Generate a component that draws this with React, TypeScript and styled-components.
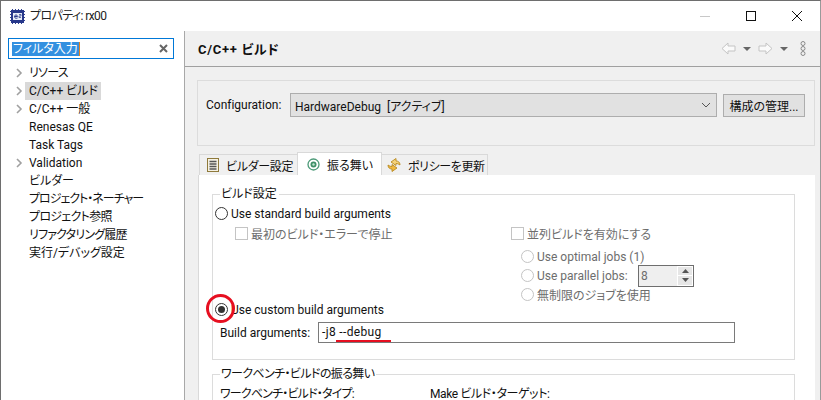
import React from 'react';
import styled, { createGlobalStyle } from 'styled-components';

const GlobalStyle = createGlobalStyle`
  html, body {
    margin: 0;
    padding: 0;
    background: #fff;
  }
  body {
    font-family: Roboto, "Noto Sans CJK JP", sans-serif;
    font-size: 12px;
    font-feature-settings: "palt", "liga" 0;
    color: #111;
  }
  * {
    box-sizing: border-box;
  }
`;

const Window = styled.div`
  width: 821px;
  height: 400px;
  overflow: hidden;
  display: flex;
  flex-direction: column;
  border-top: 1px solid #6e6e6e;
  border-left: 1px solid #6e6e6e;
  border-right: 1px solid #9a9a9a;
  background: #fff;
`;

const TitleBar = styled.div`
  height: 30px;
  flex: none;
  display: flex;
  align-items: center;
  padding-left: 8px;
  gap: 4px;
`;

const TitleText = styled.span`
  font-size: 12px;
  line-height: 16px;
  letter-spacing: -0.6px;
  color: #222;
  flex: 1;
`;

const WindowControls = styled.div`
  display: flex;
  align-items: center;
  height: 100%;
`;

const WindowButton = styled.div`
  width: 46px;
  height: 100%;
  display: flex;
  align-items: center;
  justify-content: center;
`;

const Body = styled.div`
  flex: 1;
  display: flex;
  min-height: 0;
`;

const Sidebar = styled.div`
  width: 184px;
  flex: none;
  padding: 7px 0 0 7px;
  background: #fff;
  border-right: 1px solid #a8a8a8;
`;

const SearchBox = styled.div`
  width: 166px;
  height: 21px;
  border: 1px solid #0078d7;
  display: flex;
  align-items: center;
  padding: 0 5px 0 3px;
  justify-content: space-between;
`;

const SelectedText = styled.span`
  background: #3390e0;
  color: #fff;
  font-size: 12px;
  line-height: 14px;
  padding: 0 1px;
  border-right: 1px solid #e08020;
`;

const Tree = styled.div`
  margin-top: 5px;
  display: flex;
  flex-direction: column;
`;

const TreeRow = styled.div`
  height: 18px;
  display: flex;
  align-items: center;
  padding-left: 8px;
`;

const TreeArrow = styled.span`
  width: 9px;
  flex: none;
  display: flex;
`;

const TreeLabel = styled.span<{ $selected?: boolean; $tracking?: number }>`
  padding: 0 3px 0 4px;
  line-height: 18px;
  white-space: nowrap;
  letter-spacing: ${(p) => p.$tracking ?? 0}px;
  background: ${(p) => (p.$selected ? '#d9d9d9' : 'transparent')};
`;

const Tight = styled.span<{ $tracking: number }>`
  letter-spacing: ${(p) => p.$tracking}px;
`;

const Content = styled.div`
  flex: 1;
  min-width: 0;
  display: flex;
  flex-direction: column;
  background: #f0f0f0;
`;

const PageHeader = styled.div`
  height: 36px;
  flex: none;
  display: flex;
  align-items: center;
  justify-content: space-between;
  padding: 0 14px 0 13px;
  border-bottom: 1px solid #a0a0a0;
`;

const PageTitle = styled.span`
  font-size: 13px;
  font-weight: 700;
  letter-spacing: 0.7px;
  color: #111;
`;

const NavIcons = styled.div`
  display: flex;
  align-items: center;
  gap: 7px;
`;

const MoreSlot = styled.span`
  display: flex;
  margin-left: 5px;
`;

const PagePadding = styled.div`
  padding: 13px 5px 0 12px;
  position: relative;
  flex: 1;
  min-height: 0;
`;

const ConfigBox = styled.div`
  height: 66px;
  border: 1px solid #dcdcdc;
  padding: 12px 9px 0 8px;
  display: flex;
  align-items: flex-start;
`;

const ConfigLabel = styled.span`
  width: 84px;
  line-height: 24px;
  flex: none;
`;

const ConfigSelect = styled.div`
  width: 427px;
  height: 24px;
  flex: none;
  background: #e1e1e1;
  border: 1px solid #adadad;
  display: flex;
  align-items: center;
  justify-content: space-between;
  padding: 0 5px 0 4px;
`;

const ManageButton = styled.div`
  width: 82px;
  height: 23px;
  margin: 1px 0 0 6px;
  flex: none;
  background: #e1e1e1;
  border: 1px solid #adadad;
  display: flex;
  align-items: center;
  justify-content: center;
`;

const TabBar = styled.div`
  display: flex;
  align-items: flex-end;
  height: 23px;
  margin-top: 6px;
  padding-left: 3px;
`;

const Tab = styled.div<{ $active?: boolean; $width: number; $pad: number }>`
  height: ${(p) => (p.$active ? '23px' : '21px')};
  width: ${(p) => p.$width}px;
  display: flex;
  align-items: center;
  gap: 7px;
  padding-left: ${(p) => p.$pad}px;
  white-space: nowrap;
  background: ${(p) => (p.$active ? '#fff' : '#f0f0f0')};
  border: 1px solid #d9d9d9;
  border-bottom: none;
  margin-left: -1px;
  position: relative;
  z-index: ${(p) => (p.$active ? 1 : 0)};
  svg {
    flex: none;
  }
`;

const TabPanel = styled.div`
  background: #fff;
  border-left: 1px solid #d9d9d9;
  margin-left: 1px;
  padding: 12px 20px 0 13px;
  height: 240px;
`;

const GroupBox = styled.fieldset<{ $height: number }>`
  margin: 0 0 7px;
  padding: 3px 0 0 2px;
  height: ${(p) => p.$height}px;
  border: 1px solid #dcdcdc;
  min-width: 0;
  display: block;
`;

const GroupLegend = styled.legend`
  padding: 0 2px 0 1px;
  margin-left: 5px;
  font-size: 12px;
  line-height: 15px;
`;

const OptionRow = styled.div<{ $indent?: number; $disabled?: boolean }>`
  display: flex;
  align-items: center;
  height: 17px;
  gap: 3px;
  padding-left: ${(p) => p.$indent ?? 0}px;
  color: ${(p) => (p.$disabled ? '#6d6d6d' : '#111')};
  white-space: nowrap;
`;

const Radio = styled.span<{ $disabled?: boolean; $checked?: boolean }>`
  width: 13px;
  height: 13px;
  flex: none;
  border-radius: 50%;
  border: 1px solid ${(p) => (p.$disabled ? '#c4c4c4' : '#333')};
  display: flex;
  align-items: center;
  justify-content: center;
  &::after {
    content: '';
    display: ${(p) => (p.$checked ? 'block' : 'none')};
    width: 7px;
    height: 7px;
    border-radius: 50%;
    background: #333;
  }
`;

const Checkbox = styled.span`
  width: 13px;
  height: 13px;
  flex: none;
  border: 1px solid #c4c4c4;
`;

const DisabledColumns = styled.div`
  display: flex;
  height: 76px;
  margin-top: 3px;
`;

const LeftOption = styled.div`
  width: 296px;
  flex: none;
`;

const RightOptions = styled.div`
  display: flex;
  flex-direction: column;
`;

const JobsStack = styled.div`
  display: flex;
  flex-direction: column;
  margin-top: 6px;
  gap: 2px;
`;

const JobsLabel = styled.span`
  width: 98px;
`;

const Spinner = styled.div`
  width: 56px;
  height: 22px;
  flex: none;
  border: 1px solid #6e6e6e;
  background: #efefef;
  display: flex;
  align-items: center;
  justify-content: space-between;
  padding-left: 2px;
`;

const SpinnerButtons = styled.div`
  width: 16px;
  height: 100%;
  display: flex;
  flex-direction: column;
  gap: 1px;
  padding: 1px;
  background: #fff;
`;

const SpinnerButton = styled.div`
  flex: 1;
  background: #e6e6e6;
  display: flex;
  align-items: center;
  justify-content: center;
`;

const ArgsRow = styled.div`
  display: flex;
  align-items: center;
  height: 21px;
  margin-top: 4px;
  padding-left: 5px;
`;

const ArgsLabel = styled.span`
  width: 98px;
  flex: none;
`;

const ArgsInput = styled.div`
  width: 417px;
  height: 21px;
  border: 1px solid #7a7a7a;
  padding-left: 3px;
  line-height: 19px;
  letter-spacing: 0.35px;
  position: relative;
`;

const RedUnderline = styled.span`
  position: absolute;
  left: 17px;
  top: 17px;
  width: 55px;
  height: 2px;
  background: #e60f20;
`;

const RedCircle = styled.span`
  position: absolute;
  left: 21px;
  top: 227px;
  width: 29px;
  height: 29px;
  border: 3px solid #e60f20;
  border-radius: 50%;
`;

const BehaviorRow = styled.div`
  display: flex;
  margin-top: 1px;
  padding-left: 5px;
  line-height: 16px;
`;

const BehaviorLeft = styled.span`
  width: 210px;
  flex: none;
  letter-spacing: -0.8px;
`;

const Triangle = styled.span`
  width: 0;
  height: 0;
  border-left: 4px solid transparent;
  border-right: 4px solid transparent;
  border-top: 4px solid #666;
`;

const ChipIcon = () => (
  <svg width="17" height="17" viewBox="0 0 17 17">
    <path
      d="M1 3.500h15M1 6.500h15M1 9.500h15M1 12.500h15M3.500 1v15M6.500 1v15M9.500 1v15M12.500 1v15"
      stroke="#2f3f8f"
    />
    <rect x="2" y="2" width="13" height="13" fill="#27378a" />
    <rect x="4" y="5" width="9" height="7" fill="#e6ebf6" />
    <path d="M5.500 8.500h3M5.500 8.500c0-2 3-2 3 0M5.500 8.500c0 2 2 2 3 1.500" stroke="#27378a" fill="none" />
    <path d="M10 6.500h2v1.500h-2v1.500h2" stroke="#27378a" strokeWidth="0.700" fill="none" />
  </svg>
);

const ChevronRight = () => (
  <svg width="7" height="10" viewBox="0 0 7 10">
    <path d="M1 1l4 4-4 4" fill="none" stroke="#a0a0a0" strokeWidth="1.600" />
  </svg>
);

const ClearIcon = () => (
  <svg width="9" height="9" viewBox="0 0 9 9">
    <path d="M1 1l7 7M8 1L1 8" stroke="#666" strokeWidth="2" />
  </svg>
);

const NavArrow = ({ flip }: { flip?: boolean }) => (
  <svg width="15" height="13" viewBox="0 0 15 13">
    <path
      d={flip ? 'M1 4h7V1l6 5.500-6 5.500V9H1z' : 'M14 4H7V1L1 6.500 7 12V9h7z'}
      fill="#fafafa"
      stroke="#c4c4c4"
    />
  </svg>
);

const MoreIcon = () => (
  <svg width="6" height="15" viewBox="0 0 6 15">
    <circle cx="3" cy="2.500" r="2" fill="none" stroke="#8a8a8a" />
    <circle cx="3" cy="7.500" r="2" fill="none" stroke="#8a8a8a" />
    <circle cx="3" cy="12.500" r="2" fill="none" stroke="#8a8a8a" />
  </svg>
);

const SmallChevron = () => (
  <svg width="10" height="6" viewBox="0 0 10 6">
    <path d="M1 1l4 4 4-4" fill="none" stroke="#555" />
  </svg>
);

const ListIcon = () => (
  <svg width="12" height="14" viewBox="0 0 12 14">
    <rect x="0.500" y="0.500" width="11" height="13" fill="#f6f2e4" stroke="#8f7a3c" />
    <path d="M2.500 3.500h7M2.500 6h7M2.500 8.500h7M2.500 11h7" stroke="#555" strokeWidth="1.300" />
  </svg>
);

const BehaviorIcon = () => (
  <svg width="13" height="13" viewBox="0 0 13 13">
    <circle cx="6.500" cy="6.500" r="5.500" fill="#fff" stroke="#4c9a78" strokeWidth="1.300" />
    <circle cx="6.500" cy="6.500" r="3" fill="#3f8f68" />
    <circle cx="6.500" cy="6.500" r="1.200" fill="#bfe6d0" />
  </svg>
);

const SyncIcon = () => (
  <svg width="14" height="14" viewBox="0 0 14 14">
    <path d="M13 7C13 4 11 3 9 3V0.500L4 4l5 3.500v-2c1.500 0 2.500.5 4 1.500z" fill="#f5d27a" stroke="#b98a20" strokeWidth="0.900" />
    <path d="M1 7c0 3 2 4 4 4v2.500L10 10 5 6.500v2C3.500 8.500 2.500 8 1 7z" fill="#f0b840" stroke="#b98a20" strokeWidth="0.900" />
  </svg>
);

const treeItems = [
  { label: 'リソース', arrow: true, tracking: -0.7 },
  { label: 'C/C++ ビルド', arrow: true, selected: true },
  { label: 'C/C++ 一般', arrow: true },
  { label: 'Renesas QE' },
  { label: 'Task Tags' },
  { label: 'Validation', arrow: true },
  { label: 'ビルダー' },
  { label: 'プロジェクト・ネーチャー', tracking: -1 },
  { label: 'プロジェクト参照', tracking: -0.7 },
  { label: 'リファクタリング履歴', tracking: -0.8 },
  { label: '実行/デバッグ設定' },
];

export default function App() {
  return (
    <Window>
      <GlobalStyle />
      <TitleBar>
        <ChipIcon />
        <TitleText>プロパティ: rx00</TitleText>
        <WindowControls>
          <WindowButton>
            <svg width="10" height="10" viewBox="0 0 10 10">
              <path d="M0 5.500h10" stroke="#c8c8c8" />
            </svg>
          </WindowButton>
          <WindowButton>
            <svg width="10" height="10" viewBox="0 0 10 10">
              <rect x="0.500" y="0.500" width="9" height="9" fill="none" stroke="#111" />
            </svg>
          </WindowButton>
          <WindowButton>
            <svg width="10" height="10" viewBox="0 0 10 10">
              <path d="M0 0l10 10M10 0L0 10" stroke="#111" />
            </svg>
          </WindowButton>
        </WindowControls>
      </TitleBar>
      <Body>
        <Sidebar>
          <SearchBox>
            <SelectedText>フィルタ入力</SelectedText>
            <ClearIcon />
          </SearchBox>
          <Tree>
            {treeItems.map((item) => (
              <TreeRow key={item.label}>
                <TreeArrow>{item.arrow && <ChevronRight />}</TreeArrow>
                <TreeLabel $selected={item.selected} $tracking={item.tracking}>
                  {item.label}
                </TreeLabel>
              </TreeRow>
            ))}
          </Tree>
        </Sidebar>
        <Content>
          <PageHeader>
            <PageTitle>C/C++ ビルド</PageTitle>
            <NavIcons>
              <NavArrow />
              <Triangle />
              <NavArrow flip />
              <Triangle />
              <MoreSlot>
                <MoreIcon />
              </MoreSlot>
            </NavIcons>
          </PageHeader>
          <PagePadding>
            <ConfigBox>
              <ConfigLabel>Configuration:</ConfigLabel>
              <ConfigSelect>
                <span>HardwareDebug&nbsp; [アクティブ]</span>
                <SmallChevron />
              </ConfigSelect>
              <ManageButton>構成の管理...</ManageButton>
            </ConfigBox>
            <TabBar>
              <Tab $width={99} $pad={7}>
                <ListIcon />
                <Tight $tracking={-0.3}>ビルダー設定</Tight>
              </Tab>
              <Tab $active $width={85} $pad={9}>
                <BehaviorIcon />
                振る舞い
              </Tab>
              <Tab $width={107} $pad={5}>
                <SyncIcon />
                <Tight $tracking={-0.4}>ポリシーを更新</Tight>
              </Tab>
            </TabBar>
            <TabPanel>
              <GroupBox $height={173}>
                <GroupLegend>ビルド設定</GroupLegend>
                <OptionRow>
                  <Radio />
                  Use standard build arguments
                </OptionRow>
                <DisabledColumns>
                  <LeftOption>
                    <OptionRow $indent={20} $disabled>
                      <Checkbox />
                      最初のビルド・エラーで停止
                    </OptionRow>
                  </LeftOption>
                  <RightOptions>
                    <OptionRow $disabled>
                      <Checkbox />
                      並列ビルドを有効にする
                    </OptionRow>
                    <JobsStack>
                      <OptionRow $indent={10} $disabled>
                        <Radio $disabled />
                        Use optimal jobs (1)
                      </OptionRow>
                      <OptionRow $indent={10} $disabled>
                        <Radio $disabled />
                        <JobsLabel>Use parallel jobs:</JobsLabel>
                        <Spinner>
                          8
                          <SpinnerButtons>
                            <SpinnerButton>
                              <svg width="7" height="4" viewBox="0 0 7 4">
                                <path d="M3.500 0L7 4H0z" fill="#555" />
                              </svg>
                            </SpinnerButton>
                            <SpinnerButton>
                              <svg width="7" height="4" viewBox="0 0 7 4">
                                <path d="M3.500 4L7 0H0z" fill="#555" />
                              </svg>
                            </SpinnerButton>
                          </SpinnerButtons>
                        </Spinner>
                      </OptionRow>
                      <OptionRow $indent={10} $disabled>
                        <Radio $disabled />
                        無制限のジョブを使用
                      </OptionRow>
                    </JobsStack>
                  </RightOptions>
                </DisabledColumns>
                <OptionRow>
                  <Radio $checked />
                  Use custom build arguments
                </OptionRow>
                <ArgsRow>
                  <ArgsLabel>Build arguments:</ArgsLabel>
                  <ArgsInput>
                    -j8 --debug
                    <RedUnderline />
                  </ArgsInput>
                </ArgsRow>
              </GroupBox>
              <GroupBox $height={60}>
                <GroupLegend>
                  <Tight $tracking={-0.6}>ワークベンチ・ビルドの振る舞い</Tight>
                </GroupLegend>
                <BehaviorRow>
                  <BehaviorLeft>ワークベンチ・ビルド・タイプ:</BehaviorLeft>
                  <Tight $tracking={-0.4}>Make ビルド・ターゲット:</Tight>
                </BehaviorRow>
              </GroupBox>
            </TabPanel>
            <RedCircle />
          </PagePadding>
        </Content>
      </Body>
    </Window>
  );
}
